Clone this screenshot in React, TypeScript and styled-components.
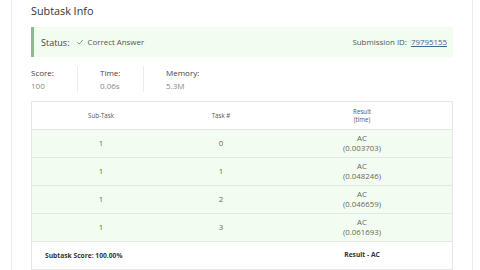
import React from "react";
import styled, { createGlobalStyle } from "styled-components";

const Global = createGlobalStyle`
  html, body { margin: 0; padding: 0; background: #ffffff; }
  body { font-family: "Open Sans", "Noto Sans", sans-serif; }
`;

const Page = styled.div`
  width: 480px;
  height: 270px;
  overflow: hidden;
  background: #fff;
`;

const Card = styled.div`
  margin-left: 11px;
  width: 462px;
  height: 270px;
  box-sizing: border-box;
  border-left: 1px solid #ececec;
  border-right: 1px solid #ececec;
  padding: 0 19px 0 19px;
`;

const Title = styled.h2`
  margin: 0;
  height: 21px;
  line-height: 21px;
  font-size: 10.8px;
  font-weight: 400;
  color: #333;
`;

const StatusBox = styled.div`
  margin-top: 6px;
  height: 30px;
  box-sizing: border-box;
  border-left: 3px solid #8dbb8d;
  background: #f3fcf0;
  display: flex;
  align-items: center;
  justify-content: space-between;
  padding: 0 6px 0 7px;
  font-size: 9px;
  color: #444;
`;

const StatusLeft = styled.div`
  display: flex;
  align-items: center;
  gap: 4px;
`;

const Muted = styled.span`
  color: #555;
  font-size: 7.9px;
`;

const Link = styled.a`
  color: #3f6a8c;
  text-decoration: underline;
  margin-left: 4px;
`;

const Stats = styled.div`
  display: flex;
  margin-top: 9px;
  height: 26px;
`;

const Stat = styled.div<{ $w: number; $first?: boolean; $last?: boolean }>`
  width: ${(p) => p.$w}px;
  box-sizing: border-box;
  padding-left: ${(p) => (p.$first ? 0 : 22)}px;
  border-right: ${(p) => (p.$last ? "none" : "1px solid #ececec")};
  display: flex;
  flex-direction: column;
  justify-content: center;
  gap: 1px;
`;

const StatLabel = styled.div`
  font-size: 8px;
  line-height: 12px;
  color: #444;
`;

const StatValue = styled.div`
  font-size: 8px;
  line-height: 12px;
  color: #888;
`;

const Table = styled.div`
  margin-top: 9px;
  border: 1px solid #e6e6e6;
  border-bottom: none;
`;

const Row = styled.div<{ $bg: string }>`
  display: grid;
  grid-template-columns: 138px 102px 1fr;
  height: 28px;
  box-sizing: border-box;
  border-bottom: 1px solid #e6e6e6;
  background: ${(p) => p.$bg};
`;

const Cell = styled.div<{ $size: number; $color: string; $bold?: boolean }>`
  display: flex;
  flex-direction: column;
  align-items: center;
  justify-content: center;
  text-align: center;
  font-size: ${(p) => p.$size}px;
  line-height: ${(p) => p.$size + 1.5}px;
  color: ${(p) => p.$color};
  font-weight: ${(p) => (p.$bold ? 700 : 400)};
`;

const FooterLeft = styled.div`
  grid-column: 1 / 3;
  display: flex;
  align-items: center;
  padding-left: 13px;
  font-size: 6.7px;
  font-weight: 700;
  color: #333;
`;

const Check = () => (
  <svg width="8" height="8" viewBox="0 0 10 10" style={{ marginLeft: 2 }}>
    <path d="M1.5 5.2 L4 7.6 L8.6 2.4" fill="none" stroke="#6aa86a" strokeWidth="1.2" />
  </svg>
);

const rows = [
  ["1", "0", "0.003703"],
  ["1", "1", "0.048246"],
  ["1", "2", "0.046659"],
  ["1", "3", "0.061693"],
];

export default function App() {
  return (
    <Page>
      <Global />
      <Card>
        <Title>Subtask Info</Title>
        <StatusBox>
          <StatusLeft>
            <span>Status:</span>
            <Check />
            <Muted>Correct Answer</Muted>
          </StatusLeft>
          <Muted>
            Submission ID:<Link href="#">79795155</Link>
          </Muted>
        </StatusBox>
        <Stats>
          <Stat $w={47} $first>
            <StatLabel>Score:</StatLabel>
            <StatValue>100</StatValue>
          </Stat>
          <Stat $w={66}>
            <StatLabel>Time:</StatLabel>
            <StatValue>0.06s</StatValue>
          </Stat>
          <Stat $w={100} $last>
            <StatLabel>Memory:</StatLabel>
            <StatValue>5.3M</StatValue>
          </Stat>
        </Stats>
        <Table>
          <Row $bg="#ffffff">
            <Cell $size={6.2} $color="#555">Sub-Task</Cell>
            <Cell $size={6.2} $color="#555">Task #</Cell>
            <Cell $size={6.2} $color="#555">
              <span>Result</span>
              <span>(time)</span>
            </Cell>
          </Row>
          {rows.map((r, i) => (
            <Row key={i} $bg="#f3fcf0">
              <Cell $size={7.8} $color="#666">{r[0]}</Cell>
              <Cell $size={7.8} $color="#666">{r[1]}</Cell>
              <Cell $size={7.8} $color="#666">
                <span>AC</span>
                <span>({r[2]})</span>
              </Cell>
            </Row>
          ))}
          <Row $bg="#ffffff">
            <FooterLeft>Subtask Score: 100.00%</FooterLeft>
            <Cell $size={6.7} $color="#333" $bold>
              <span>Result - AC</span>
            </Cell>
          </Row>
        </Table>
      </Card>
    </Page>
  );
}
